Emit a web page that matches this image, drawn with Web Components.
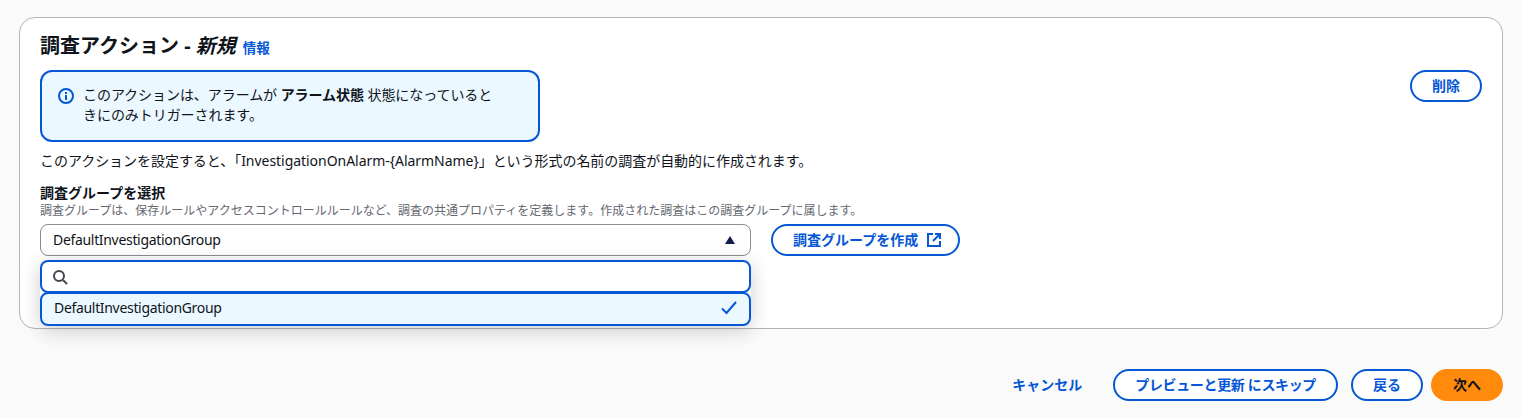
<!DOCTYPE html>
<html lang="ja">
<head>
<meta charset="utf-8">
<title>調査アクション</title>
<style>
    html, body { margin: 0; padding: 0; }
    body {
        background: #fafafa;
        color: #0f141a;
        font: 14px/20px "Noto Sans", "Noto Sans CJK JP", sans-serif;
    }
    action-page { display: block; }
</style>
</head>
<body>
<action-page>
    <action-card>
        <span slot="title">調査アクション - <i>新規</i></span>
        <info-alert slot="alert">このアクションは、アラームが <b>アラーム状態</b> 状態になっていると<br>きにのみトリガーされます。</info-alert>
        <aws-button slot="action">削除</aws-button>
        <span slot="desc">このアクションを設定すると、「InvestigationOnAlarm-{AlarmName}」という形式の名前の調査が自動的に作成されます。</span>
        <group-field></group-field>
    </action-card>
    <wizard-footer></wizard-footer>
</action-page>

<script>
const BLUE = '#0557d5';

class AwsButton extends HTMLElement {
    constructor () {
        super();
        this.attachShadow({ mode: 'open' });
        this.shadowRoot.innerHTML = `
        <style>
            :host {
                display: inline-flex;
                align-items: center;
                justify-content: center;
                gap: 10px;
                box-sizing: border-box;
                height: 32px;
                padding: 0 20px;
                border: 2px solid ${BLUE};
                border-radius: 20px;
                background: #fff;
                color: ${BLUE};
                font-size: 14px;
                font-weight: 700;
                white-space: nowrap;
            }
            :host([variant="primary"]) {
                background: #ff8a0c;
                border-color: #ff8a0c;
                color: #0f141a;
            }
            :host([variant="link"]) {
                background: transparent;
                border-color: transparent;
            }
            :host([tight]) { letter-spacing: -.35px; }
            :host([with-icon]) { padding-right: 16px; gap: 8px; }
        </style>
        <slot></slot><slot name="icon"></slot>`;
    }
}

class InfoAlert extends HTMLElement {
    constructor () {
        super();
        this.attachShadow({ mode: 'open' });
        this.shadowRoot.innerHTML = `
        <style>
            :host {
                display: flex;
                gap: 9px;
                box-sizing: border-box;
                width: 500px;
                height: 72px;
                padding: 13px 16px;
                border: 2px solid ${BLUE};
                border-radius: 12px;
                background: #ebf8ff;
                letter-spacing: -.06px;
            }
            svg { flex: none; margin-top: 3px; }
            .text { width: 420px; }
        </style>
        <svg width="16" height="16" viewBox="0 0 16 16" fill="none" stroke="${BLUE}" stroke-width="2">
            <circle cx="8" cy="8" r="7"/>
            <path d="M8 7v5M8 4v2"/>
        </svg>
        <div class="text"><slot></slot></div>`;
    }
}

class ActionCard extends HTMLElement {
    constructor () {
        super();
        this.attachShadow({ mode: 'open' });
        this.shadowRoot.innerHTML = `
        <style>
            :host {
                display: block;
                box-sizing: border-box;
                height: 312px;
                margin: 17px 18px 0 19px;
                padding: 14px 20px 0;
                border: 1px solid #b4b4bb;
                border-radius: 16px;
                background: #fff;
            }
            .head { display: flex; align-items: baseline; gap: 7px; height: 28px; line-height: 28px; }
            .title { font-size: 20px; font-weight: 700; }
            .info { color: ${BLUE}; font-size: 13.5px; font-weight: 700; }
            .top { display: flex; justify-content: space-between; align-items: flex-start; margin-top: 10px; }
            .desc { margin-top: 9px; font-size: 14px; letter-spacing: -.04px; }
        </style>
        <div class="head">
            <span class="title"><slot name="title"></slot></span>
            <span class="info">情報</span>
        </div>
        <div class="top"><slot name="alert"></slot><slot name="action"></slot></div>
        <div class="desc"><slot name="desc"></slot></div>
        <slot></slot>`;
    }
}

class GroupField extends HTMLElement {
    constructor () {
        super();
        this.attachShadow({ mode: 'open' });
        this.shadowRoot.innerHTML = `
        <style>
            :host { display: block; margin-top: 13px; }
            .label { font-size: 14px; font-weight: 700; line-height: 18px; }
            .hint { margin-top: 1px; color: #656871; font-size: 12px; line-height: 16px; }
            .row { display: flex; align-items: flex-start; gap: 20px; margin-top: 5px; }
            .wrap { position: relative; width: 711px; }
            .trigger {
                display: flex;
                align-items: center;
                justify-content: space-between;
                box-sizing: border-box;
                height: 32px;
                padding: 0 15px 0 12px;
                border: 1px solid #8c8c94;
                border-radius: 8px;
                background: #fff;
                letter-spacing: -.32px;
            }
            .menu {
                position: absolute;
                left: 0;
                right: 0;
                top: 36px;
                border-radius: 8px;
                box-shadow: 0 4px 20px rgba(0, 7, 22, .2);
            }
            .search, .option {
                display: flex;
                align-items: center;
                box-sizing: border-box;
                border: 2px solid ${BLUE};
                border-radius: 8px;
            }
            .search { height: 33px; padding-left: 10px; background: #fff; }
            .option {
                height: 34px;
                margin-top: -1px;
                padding: 0 12px 2px;
                justify-content: space-between;
                background: #ebf8ff;
                letter-spacing: -.32px;
            }
        </style>
        <div class="label">調査グループを選択</div>
        <div class="hint">調査グループは、保存ルールやアクセスコントロールルールなど、調査の共通プロパティを定義します。作成された調査はこの調査グループに属します。</div>
        <div class="row">
            <div class="wrap">
                <div class="trigger">
                    <span>DefaultInvestigationGroup</span>
                    <svg width="10" height="8" viewBox="0 0 10 8"><path d="M5 0l5 8H0z" fill="#0f1b4a"/></svg>
                </div>
                <div class="menu">
                    <div class="search">
                        <svg width="16" height="16" viewBox="0 0 16 16" fill="none" stroke="#424650" stroke-width="2">
                            <circle cx="7" cy="7" r="5"/><path d="M11 11l4 4"/>
                        </svg>
                    </div>
                    <div class="option">
                        <span>DefaultInvestigationGroup</span>
                        <svg width="16" height="16" viewBox="0 0 16 16" fill="none" stroke="${BLUE}" stroke-width="2"><path d="M1 8.5l4.5 4.5L15 2"/></svg>
                    </div>
                </div>
            </div>
            <aws-button with-icon>調査グループを作成
                <svg slot="icon" width="16" height="16" viewBox="0 0 16 16" fill="none" stroke="${BLUE}" stroke-width="2" style="display:block">
                    <path d="M7 2H2v12h12V9M9 2h5v5M14 2L7 9"/>
                </svg>
            </aws-button>
        </div>`;
    }
}

class WizardFooter extends HTMLElement {
    constructor () {
        super();
        this.attachShadow({ mode: 'open' });
        this.shadowRoot.innerHTML = `
        <style>
            :host {
                display: flex;
                justify-content: flex-end;
                align-items: center;
                gap: 8px;
                margin: 40px 18px 0 0;
            }
            .cancel { margin-right: 1px; }
            .skip { margin-right: 5px; }
        </style>
        <aws-button class="cancel" variant="link">キャンセル</aws-button>
        <aws-button class="skip" tight>プレビューと更新 にスキップ</aws-button>
        <aws-button>戻る</aws-button>
        <aws-button variant="primary">次へ</aws-button>`;
    }
}

class ActionPage extends HTMLElement {
    constructor () {
        super();
        this.attachShadow({ mode: 'open' }).innerHTML = '<style>:host{display:block}</style><slot></slot>';
    }
}

customElements.define('aws-button', AwsButton);
customElements.define('info-alert', InfoAlert);
customElements.define('action-card', ActionCard);
customElements.define('group-field', GroupField);
customElements.define('wizard-footer', WizardFooter);
customElements.define('action-page', ActionPage);
</script>
</body>
</html>
